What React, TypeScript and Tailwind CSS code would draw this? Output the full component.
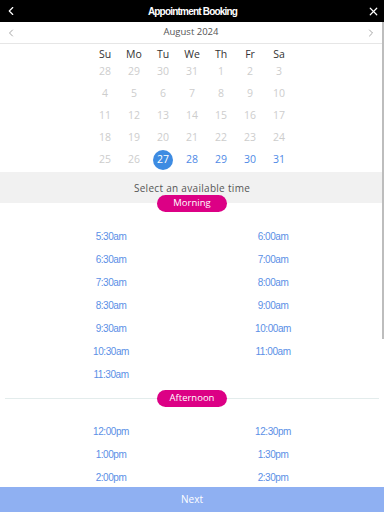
import { ChevronLeft, ChevronRight, X } from "lucide-react";

const days = ["Su", "Mo", "Tu", "We", "Th", "Fr", "Sa"];

const weeks: { d: number; on?: boolean }[][] = [
  [28, 29, 30, 31, 1, 2, 3].map((d) => ({ d })),
  [4, 5, 6, 7, 8, 9, 10].map((d) => ({ d })),
  [11, 12, 13, 14, 15, 16, 17].map((d) => ({ d })),
  [18, 19, 20, 21, 22, 23, 24].map((d) => ({ d })),
  [
    { d: 25 },
    { d: 26 },
    { d: 27, on: true },
    { d: 28, on: true },
    { d: 29, on: true },
    { d: 30, on: true },
    { d: 31, on: true },
  ],
];

const morning = [
  "5:30am", "6:00am",
  "6:30am", "7:00am",
  "7:30am", "8:00am",
  "8:30am", "9:00am",
  "9:30am", "10:00am",
  "10:30am", "11:00am",
  "11:30am",
];

const afternoon = ["12:00pm", "12:30pm", "1:00pm", "1:30pm", "2:00pm", "2:30pm"];

function Pill({ label }: { label: string }) {
  return (
    <div className="flex h-[17px] w-[70px] items-center justify-center rounded-full bg-[#dc0085] text-[9.5px] text-white">
      {label}
    </div>
  );
}

function Times({ items }: { items: string[] }) {
  return (
    <div className="grid grid-cols-2 px-[30px] font-['Liberation_Sans',Arial,sans-serif] text-[10px] tracking-[-0.45px] text-[#5b8fe6]">
      {items.map((t) => (
        <div key={t} className="flex h-[23px] items-center justify-center">
          {t}
        </div>
      ))}
    </div>
  );
}

export default function App() {
  const selected = 27;

  return (
    <div className="relative flex h-[512px] w-[384px] flex-col overflow-hidden bg-white font-['Open_Sans',sans-serif]">
      {/* top bar */}
      <div className="flex h-[22px] shrink-0 items-center justify-between bg-black px-[4px] text-white">
        <ChevronLeft size={14} strokeWidth={2} />
        <span className="font-['Liberation_Sans',Arial,sans-serif] text-[10px] font-bold tracking-[-0.8px]">
          Appointment Booking
        </span>
        <X size={13} strokeWidth={2.2} />
      </div>

      <div className="relative flex-1 overflow-hidden">
        {/* month switcher */}
        <div className="mr-[2px] flex h-[22px] items-center justify-between border-b border-[#e6e6e6] px-[5px] text-[#888]">
          <ChevronLeft size={12} strokeWidth={1.5} />
          <span className="text-[9.5px] text-[#555]">August 2024</span>
          <ChevronRight size={12} strokeWidth={1.5} />
        </div>

        {/* calendar */}
        <div className="flex justify-center pt-[3px] pb-[1px]">
          <div className="w-[203px]">
            <div className="grid h-[14px] grid-cols-7 text-center text-[10.5px] leading-[14px] text-[#333]">
              {days.map((d) => (
                <span key={d}>{d}</span>
              ))}
            </div>
            {weeks.map((w, i) => (
              <div key={i} className="grid h-[22px] grid-cols-7 text-[10.5px]">
                {w.map((c, j) => (
                  <div key={j} className="flex items-center justify-center">
                    {c.on && c.d === selected ? (
                      <span className="flex h-[20px] w-[20px] items-center justify-center rounded-full bg-[#3d8be2] text-white">
                        {c.d}
                      </span>
                    ) : (
                      <span className={c.on ? "text-[#4f8ae6]" : "text-[#cdcdcd]"}>{c.d}</span>
                    )}
                  </div>
                ))}
              </div>
            ))}
          </div>
        </div>

        {/* time header */}
        <div className="flex h-[31px] items-center justify-center bg-[#f1f1f1] pt-[1px] text-[10px] tracking-[0.3px] text-[#555]">
          Select an available time
        </div>
        <div className="-mt-[8px] flex justify-center">
          <Pill label="Morning" />
        </div>

        <div className="mt-[13px]">
          <Times items={morning} />
        </div>

        <div className="relative mt-[4px] flex h-[17px] items-center justify-center">
          <div className="absolute inset-x-[5px] top-[8px] h-px bg-[#e3ecec]" />
          <div className="relative">
            <Pill label="Afternoon" />
          </div>
        </div>

        <div className="mt-[13px]">
          <Times items={afternoon} />
        </div>

        {/* scroll thumb */}
        <div className="absolute right-0 top-0 h-[317px] w-[2px] bg-[#bdbdbd]" />
      </div>

      <div className="flex h-[25px] shrink-0 items-center justify-center bg-[#8fb0f2] text-[10px] text-white">
        Next
      </div>
    </div>
  );
}
